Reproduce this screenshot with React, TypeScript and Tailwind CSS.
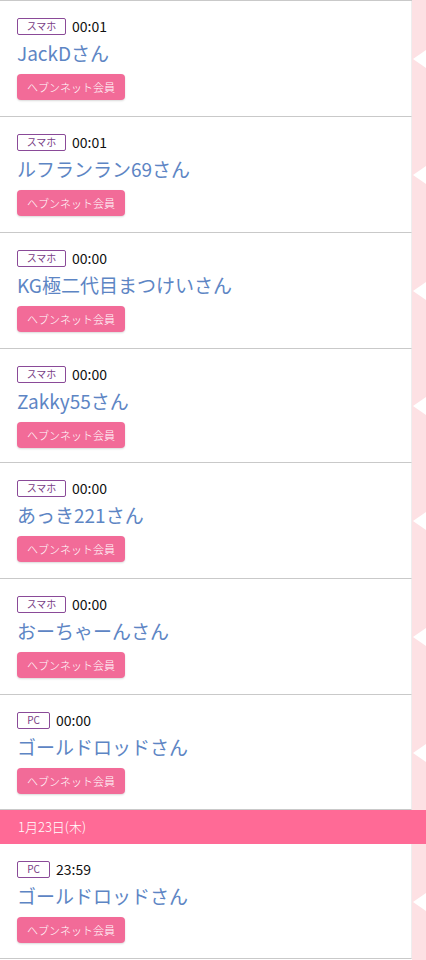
const font = { fontFamily: '"Noto Sans CJK JP", "Noto Sans", sans-serif' };

type Entry = { device: string; time: string; name: string; h: string };

const before: Entry[] = [
  { device: 'スマホ', time: '00:01', name: 'JackDさん', h: 'h-[116px]' },
  { device: 'スマホ', time: '00:01', name: 'ルフランラン69さん', h: 'h-[116px]' },
  { device: 'スマホ', time: '00:00', name: 'KG極二代目まつけいさん', h: 'h-[116px]' },
  { device: 'スマホ', time: '00:00', name: 'Zakky55さん', h: 'h-[114px]' },
  { device: 'スマホ', time: '00:00', name: 'あっき221さん', h: 'h-[116px]' },
  { device: 'スマホ', time: '00:00', name: 'おーちゃーんさん', h: 'h-[116px]' },
  { device: 'PC', time: '00:00', name: 'ゴールドロッドさん', h: 'h-[115px]' },
];

const after: Entry[] = [{ device: 'PC', time: '23:59', name: 'ゴールドロッドさん', h: 'h-[115px]' }];

const Row = ({ e }: { e: Entry }) => (
  <div className={`flex ${e.h}`}>
    <div className="w-[412px] border-b border-r border-b-[#c9c9c9] border-r-[#eeeeee] bg-white pl-[17px] pt-[16px]">
      <div className="flex h-[18px] items-center gap-[6px]">
        <span
          className={`flex h-[17px] items-center justify-center rounded-[2px] border border-[#8a4a98] text-[10px] leading-none text-[#7a3d86] ${
            e.device === 'PC' ? 'w-[33px]' : 'w-[49px]'
          }`}
        >
          {e.device}
        </span>
        <span className="text-[14px] leading-none text-[#111]">{e.time}</span>
      </div>
      <div className="mt-[4px] h-[28px] text-[19px] leading-[28px] text-[#5d85c4]">{e.name}</div>
      <div className="mt-[7px] flex h-[26px] w-[108px] items-center justify-center rounded-[4px] bg-[#f26b98] text-[11px] font-light text-white shadow-[0_1px_2px_rgba(0,0,0,0.15)]">
        ヘブンネット会員
      </div>
    </div>
    <div className="flex w-[14px] items-center justify-end bg-[#fde1e4]">
      <svg width="13" height="18" viewBox="0 0 13 18">
        <polygon points="13,0 0,9 13,18" fill="#ffffff" />
      </svg>
    </div>
  </div>
);

export default function App() {
  return (
    <div className="h-[960px] w-[426px] overflow-hidden bg-white" style={font}>
      <div className="flex">
        <div className="h-[1px] w-[412px] bg-[#c9c9c9]" />
        <div className="h-[1px] w-[14px] bg-[#fde1e4]" />
      </div>
      {before.map((e, i) => (
        <Row key={i} e={e} />
      ))}
      <div className="flex h-[34px] items-center bg-[#ff6a96] pl-[18px] text-[13px] font-light text-white">1月23日(木)</div>
      {after.map((e, i) => (
        <Row key={i} e={e} />
      ))}
      <div className="flex h-[10px]">
        <div className="w-[412px] bg-white" />
        <div className="w-[14px] bg-[#fde1e4]" />
      </div>
    </div>
  );
}
